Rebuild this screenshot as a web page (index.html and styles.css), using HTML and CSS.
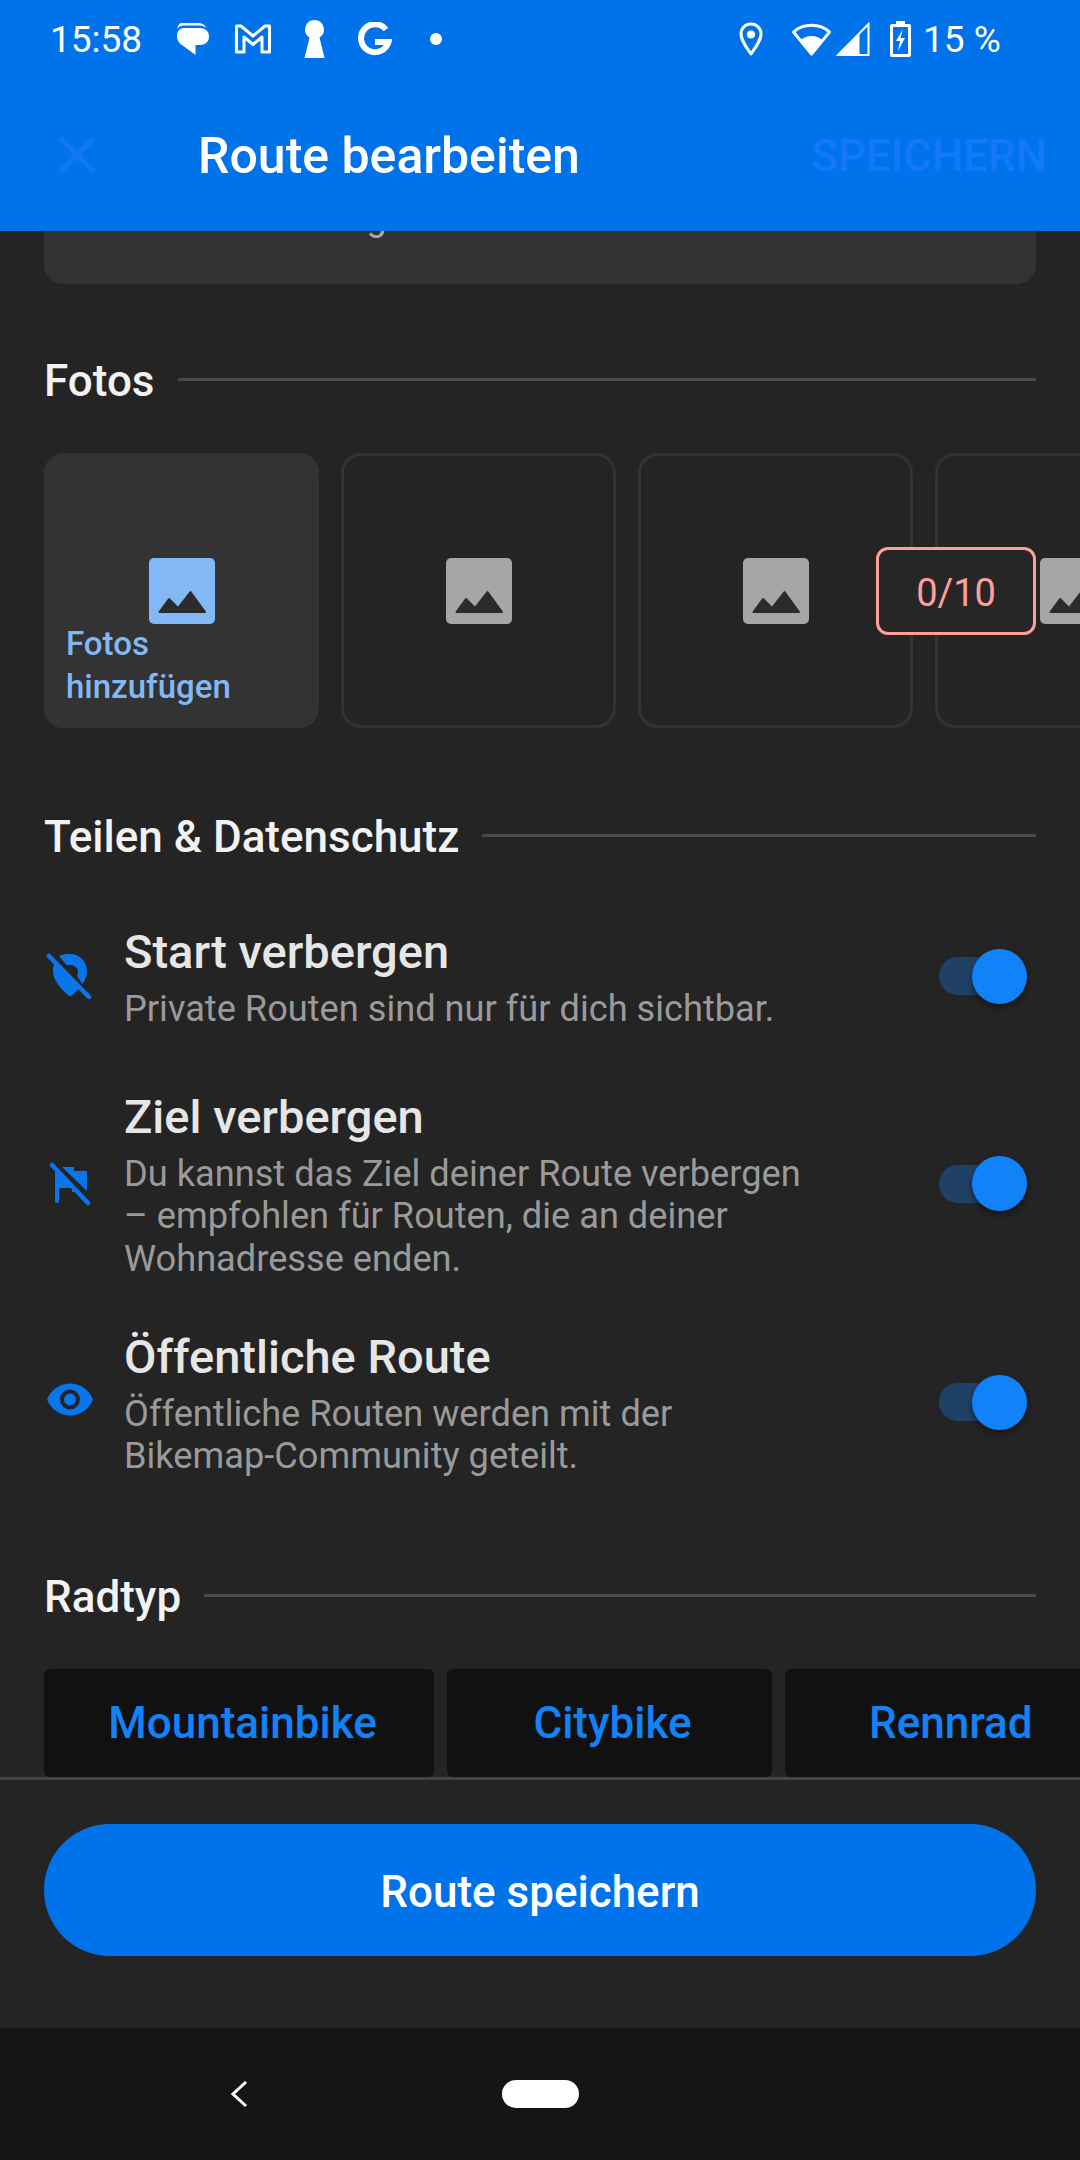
FILE: index.html
```html
<!DOCTYPE html>
<html lang="de">
<head>
<meta charset="utf-8">
<title>Route bearbeiten</title>
<link rel="stylesheet" href="styles.css">
</head>
<body>
<div class="screen">
  <header class="appbar">
    <div class="statusbar">
      <span class="time">15:58</span>
      <div class="notif">
        <svg class="ic-chat" viewBox="0 0 33 34"><path class="wf" d="M6 0h15c5 0 8 2 10 5-3-2-5-2.500-9-2.500H8C5 2.500 3 3.500 1.500 6 1.500 3 3 0 6 0z"/><path class="wf" d="M8 5h16c5 0 9 3 9 8.500S29 22 24 22h-4.500v10L8 23.500C3 20.500 1 17 1 13c0-5 3-8 7-8z"/></svg>
        <svg class="ic-m" viewBox="0 0 37 30"><path class="ws" d="M2 2h4.500L18.500 12 30.500 2H35v26h-7.500V13l-9 7.500-9-7.500v15H2z"/></svg>
        <svg class="ic-key" viewBox="0 0 20 38"><path class="wf" d="M10 0a9.500 9.500 0 0 1 5 17.500L20 38H0L5 17.500A9.500 9.500 0 0 1 10 0z"/></svg>
        <svg class="ic-g" viewBox="0 0 33 35"><path class="wst" d="M27.500 7.500A14 14 0 1 0 30 20H16.500"/></svg>
        <span class="dot"></span>
      </div>
      <div class="sys">
        <svg class="ic-pin" viewBox="0 0 24 34"><path class="ws" d="M12 2C6 2 2 6.500 2 12c0 6 5 13 10 20 5-7 10-14 10-20 0-5.500-4-10-10-10z"/><circle class="wf" cx="12" cy="12.500" r="4"/></svg>
        <svg class="ic-wifi" viewBox="0 0 40 35"><path class="ws" d="M2 10C12 1 28 1 38 10L20 32z"/><path class="wf" d="M9.500 18C15 12.500 25 12.500 30.500 18L20 32z"/></svg>
        <svg class="ic-signal" viewBox="0 0 33 34"><path class="ws2" d="M32 2v31H1.500z"/><path class="wf" d="M23 11v22H1.500z"/></svg>
        <svg class="ic-batt" viewBox="0 0 21 36"><path class="wf-e" d="M6 0h9v3h4a2 2 0 0 1 2 2v29a2 2 0 0 1-2 2H2a2 2 0 0 1-2-2V5a2 2 0 0 1 2-2h4zM3 6v27h15V6z"/><path class="wf" d="M13 8L6 20h4l-2 10 7-13h-4.500z"/></svg>
        <span class="batt">15 %</span>
      </div>
    </div>
    <div class="toolbar">
      <svg class="close" viewBox="0 0 38 38"><path d="M2 2l34 34M36 2L2 36"/></svg>
      <h1 class="title">Route bearbeiten</h1>
      <span class="action">SPEICHERN</span>
    </div>
  </header>

  <main class="content">
    <div class="desc-card"><span class="desc-text">Beschreibung</span></div>

    <div class="section-head first"><h2>Fotos</h2><span class="rule"></span></div>
    <div class="photos-wrap">
      <div class="photos">
        <div class="tile add">
          <svg class="pic" viewBox="0 0 66 66"><path class="pic-a" d="M5 0h56a5 5 0 0 1 5 5v56a5 5 0 0 1-5 5H5a5 5 0 0 1-5-5V5a5 5 0 0 1 5-5z"/><path class="pic-cut" d="M10.500 54L20 41l9 9 12.500-16L56 54z"/></svg>
          <span class="add-label">Fotos<br>hinzufügen</span>
        </div>
        <div class="tile"><svg class="pic" viewBox="0 0 66 66"><path class="pic-g" d="M5 0h56a5 5 0 0 1 5 5v56a5 5 0 0 1-5 5H5a5 5 0 0 1-5-5V5a5 5 0 0 1 5-5z"/><path class="pic-cut" d="M10.500 54L20 41l9 9 12.500-16L56 54z"/></svg></div>
        <div class="tile"><svg class="pic" viewBox="0 0 66 66"><path class="pic-g" d="M5 0h56a5 5 0 0 1 5 5v56a5 5 0 0 1-5 5H5a5 5 0 0 1-5-5V5a5 5 0 0 1 5-5z"/><path class="pic-cut" d="M10.500 54L20 41l9 9 12.500-16L56 54z"/></svg></div>
        <div class="tile"><svg class="pic" viewBox="0 0 66 66"><path class="pic-g" d="M5 0h56a5 5 0 0 1 5 5v56a5 5 0 0 1-5 5H5a5 5 0 0 1-5-5V5a5 5 0 0 1 5-5z"/><path class="pic-cut" d="M10.500 54L20 41l9 9 12.500-16L56 54z"/></svg></div>
      </div>
      <div class="counter">0/10</div>
    </div>

    <div class="section-head privacy"><h2>Teilen &amp; Datenschutz</h2><span class="rule"></span></div>

    <div class="opt opt1">
      <svg class="opt-ic" viewBox="0 0 48 48"><path class="bf" d="M13 4c3-1.500 7-2 11-2 9.400 0 17 7.600 17 17 0 4.500-1.500 9-4.500 13L31 24c1-1.500 1.500-3.200 1-5-.7-3.500-4-6-7.500-6-1.500 0-3 .3-4.500-.5z"/><path class="bf" d="M9 10C7.700 12.500 7 15.700 7 19c0 8 6 16 16 25 .6.600 1.500.600 2.100 0L33 37z"/><path class="bs" d="M3 4l40 41"/></svg>
      <div class="opt-text"><h3>Start verbergen</h3><p>Private Routen sind nur für dich sichtbar.</p></div>
      <div class="toggle"><span class="knob"></span></div>
    </div>
    <div class="opt opt2">
      <svg class="opt-ic" viewBox="0 0 48 48"><path class="bf" d="M9 10L29 31v1h-3v-4H13v13a2 2 0 0 1-4 0z"/><path class="bf" d="M16 7h12v4h13v20z"/><path class="bs" d="M6 5l36 38"/></svg>
      <div class="opt-text"><h3>Ziel verbergen</h3><p>Du kannst das Ziel deiner Route verbergen<br>– empfohlen für Routen, die an deiner<br>Wohnadresse enden.</p></div>
      <div class="toggle"><span class="knob"></span></div>
    </div>
    <div class="opt opt3">
      <svg class="opt-ic" viewBox="0 0 48 48"><path class="bf" fill-rule="evenodd" d="M24 5.500C13.500 5.500 5 12 1 21.500 5 31 13.500 37.500 24 37.500S43 31 47 21.500C43 12 34.500 5.500 24 5.500zm0 26a10 10 0 1 1 0-20 10 10 0 0 1 0 20zm0-16a6 6 0 1 0 0 12 6 6 0 0 0 0-12z"/></svg>
      <div class="opt-text"><h3>Öffentliche Route</h3><p>Öffentliche Routen werden mit der<br>Bikemap-Community geteilt.</p></div>
      <div class="toggle"><span class="knob"></span></div>
    </div>

    <div class="section-head radtyp"><h2>Radtyp</h2><span class="rule"></span></div>
    <div class="chips">
      <span class="chip c1">Mountainbike</span>
      <span class="chip c2">Citybike</span>
      <span class="chip c3">Rennrad</span>
    </div>
  </main>

  <footer class="savebar"><button class="save">Route speichern</button></footer>

  <nav class="navbar">
    <svg class="back" viewBox="0 0 18 28"><path d="M16 2L3 14l13 12"/></svg>
    <span class="home"></span>
  </nav>
</div>
</body>
</html>
```
FILE: styles.css
```css
* { box-sizing: border-box; }
html, body { margin: 0; padding: 0; }
body { background: #242424; font-family: Roboto, "Liberation Sans", sans-serif; }
.screen { width: 1080px; height: 2160px; display: flex; flex-direction: column; overflow: hidden; background: #242424; }
h1, h2, h3, p { margin: 0; font-weight: 400; }
svg { display: block; flex: none; }

.appbar { height: 231px; flex: none; background: #0073EB; color: #fff; position: relative; z-index: 2; }
.statusbar { height: 78px; display: flex; align-items: center; padding: 0 0 0 50px; }
.time { font-size: 37px; width: 126px; }
.notif { display: flex; align-items: center; width: 563px; }
.sys { display: flex; align-items: center; }
.wf { fill: #fff; }
.wf-e { fill: #fff; fill-rule: evenodd; }
.ws { fill: none; stroke: #fff; stroke-width: 3; stroke-linejoin: round; }
.ws2 { fill: none; stroke: #fff; stroke-width: 2; }
.wst { fill: none; stroke: #fff; stroke-width: 6; }
.ic-chat { width: 33px; height: 34px; margin-top: 2px; }
.ic-m { width: 38px; height: 30px; margin-left: 25px; }
.ic-key { width: 21px; height: 38px; margin-left: 32px; }
.ic-g { width: 34px; height: 35px; margin-left: 33px; }
.dot { width: 12px; height: 12px; border-radius: 50%; background: #fff; margin-left: 38px; }
.ic-pin { width: 24px; height: 34px; }
.ic-wifi { width: 41px; height: 35px; margin-left: 28px; }
.ic-signal { width: 34px; height: 34px; margin-left: 4px; }
.ic-batt { width: 21px; height: 36px; margin-left: 20px; }
.batt { font-size: 37px; margin-left: 12px; }

.toolbar { height: 153px; display: flex; align-items: center; padding: 0 33px 0 58px; }
.close { width: 38px; height: 38px; stroke: #1276F5; stroke-width: 5; fill: none; }
.title { font-size: 50px; font-weight: 500; margin: 2px 0 0 102px; flex: 1; color: #fff; }
.action { font-size: 44px; font-weight: 500; margin-top: 2px; color: #1478FA; }

.content { flex: 1; min-height: 0; overflow: hidden; display: flex; flex-direction: column; }
.desc-card { height: 53px; flex: none; margin: 0 44px; background: #333; border-radius: 0 0 20px 20px; overflow: hidden; position: relative; }
.desc-text { position: absolute; left: 124px; top: -33px; font-size: 36px; line-height: 40px; color: #aaa; }

.section-head { display: flex; align-items: center; gap: 23px; padding: 0 44px; flex: none; height: 50px; }
.section-head h2 { font-size: 44px; font-weight: 500; color: #f2f2f2; white-space: nowrap; line-height: 50px; }
.rule { flex: 1; height: 3px; background: #4a4a4a; margin-top: -4px; }
.section-head.first { margin-top: 72px; }
.section-head.privacy { margin-top: 84px; }
.section-head.radtyp { margin-top: 94.500px; }

.photos-wrap { position: relative; flex: none; height: 275px; margin-top: 47px; }
.photos { display: flex; gap: 22px; padding-left: 44px; width: 1080px; overflow: hidden; height: 275px; }
.tile { width: 275px; height: 275px; flex: none; border: 3px solid #333; border-radius: 20px; display: flex; flex-direction: column; align-items: center; padding-top: 102px; }
.tile.add { background: #333; }
.pic { width: 66px; height: 66px; }
.pic-a { fill: #82B8F5; }
.pic-g { fill: #a6a6a6; }
.pic-cut { fill: #2b2b2b; stroke: #2b2b2b; stroke-width: 2; stroke-linejoin: round; }
.add-label { align-self: flex-start; margin: -2px 0 0 19px; font-size: 33px; font-weight: 500; line-height: 43px; color: #82B8F5; }
.counter { position: absolute; left: 876px; top: 94px; width: 160px; height: 88px; padding-top: 3px; border: 3px solid #FF9E9B; border-radius: 12px; background: #262626; color: #FF9E9B; font-size: 38px; display: flex; align-items: center; justify-content: center; }

.opt { display: flex; align-items: center; flex: none; padding: 0 53px 0 46px; }
.opt-ic { width: 48px; height: 48px; }
.opt-text { width: 720px; margin-left: 30px; }
.opt h3 { font-size: 47px; font-weight: 500; line-height: 60px; color: #e6e6e6; }
.opt p { font-size: 36.2px; line-height: 42.5px; margin-top: 5.5px; color: #9a9a9a; }
.bf { fill: #0A76EE; }
.bs { stroke: #0A76EE; stroke-width: 4.5; stroke-linecap: round; fill: none; }
.opt1 { margin-top: 60px; }
.opt2 { margin-top: 57px; }
.opt3 { margin-top: 47px; }
.toggle { margin-left: auto; width: 88px; height: 38px; border-radius: 19px; background: #1F4166; position: relative; flex: none; }
.knob { position: absolute; right: 0; top: -8.5px; width: 55px; height: 55px; border-radius: 50%; background: #1282F9; box-shadow: 0 3px 6px rgba(0,0,0,.45); }

.chips { display: flex; gap: 13px; padding-left: 44px; margin-top: 47px; height: 108px; flex: none; width: 1200px; }
.chip { height: 108px; background: #111; border-radius: 6px; color: #1282F9; font-size: 44px; font-weight: 500; display: flex; align-items: center; justify-content: center; flex: none; }
.c1 { width: 390px; padding-left: 7px; }
.c2 { width: 325px; padding-left: 6px; }
.c3 { width: 330px; padding-left: 84px; justify-content: flex-start; }

.savebar { height: 251px; flex: none; border-top: 3px solid #444; background: #242424; padding: 44px 44px 0; position: relative; z-index: 1; }
.save { width: 100%; height: 132px; border: 0; border-radius: 66px; background: #0073EB; color: #fff; font: 500 44px/1 Roboto, "Liberation Sans", sans-serif; padding: 3px 0 0; }

.navbar { height: 132px; flex: none; background: #151515; display: flex; align-items: center; padding-left: 230px; }
.back { width: 18px; height: 28px; fill: none; stroke: #fff; stroke-width: 3; }
.home { width: 77px; height: 28px; border-radius: 14px; background: #fff; margin-left: 254px; }
```
